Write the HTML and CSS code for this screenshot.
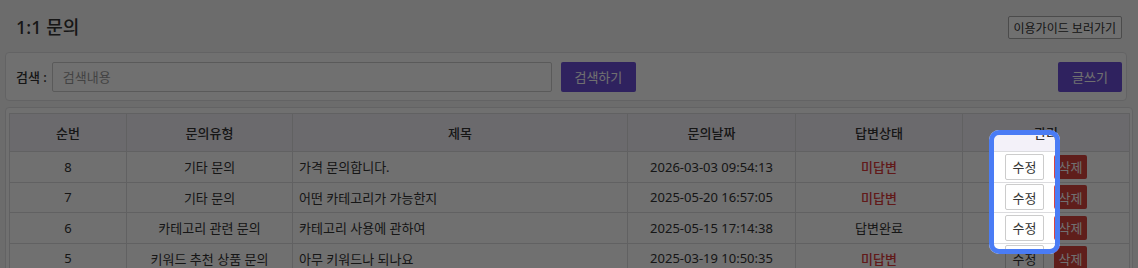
FILE: index.html
```html
<!DOCTYPE html>
<html lang="ko">
<head>
    <meta charset="UTF-8">
    <meta name="viewport" content="width=device-width, initial-scale=1.0">
    <title>1:1 문의</title>
    <link rel="stylesheet" href="styles.css">
</head>
<body>
    <div id="page">
        <div class="topBar">
            <h1 class="pageTitle">1:1 문의</h1>
            <button class="guideButton">이용가이드 보러가기</button>
        </div>

        <div class="card searchCard">
            <label class="searchLabel">검색 :</label>
            <input type="text" class="searchInput" placeholder="검색내용">
            <button class="purpleButton searchButton">검색하기</button>
            <button class="purpleButton writeButton">글쓰기</button>
        </div>

        <div class="card tableCard">
            <table class="qnaTable">
                <colgroup>
                    <col style="width: 117px">
                    <col style="width: 166px">
                    <col style="width: 335px">
                    <col style="width: 168px">
                    <col style="width: 167px">
                    <col style="width: 167px">
                </colgroup>
                <thead>
                    <tr>
                        <th>순번</th>
                        <th>문의유형</th>
                        <th>제목</th>
                        <th>문의날짜</th>
                        <th>답변상태</th>
                        <th>관리</th>
                    </tr>
                </thead>
                <tbody>
                    <tr>
                        <td>8</td>
                        <td>기타 문의</td>
                        <td class="subject">가격 문의합니다.</td>
                        <td>2026-03-03 09:54:13</td>
                        <td class="waiting">미답변</td>
                        <td><div class="actions"><button class="editButton">수정</button><button class="deleteButton">삭제</button></div></td>
                    </tr>
                    <tr>
                        <td>7</td>
                        <td>기타 문의</td>
                        <td class="subject">어떤 카테고리가 가능한지</td>
                        <td>2025-05-20 16:57:05</td>
                        <td class="waiting">미답변</td>
                        <td><div class="actions"><button class="editButton">수정</button><button class="deleteButton">삭제</button></div></td>
                    </tr>
                    <tr>
                        <td>6</td>
                        <td>카테고리 관련 문의</td>
                        <td class="subject">카테고리 사용에 관하여</td>
                        <td>2025-05-15 17:14:38</td>
                        <td>답변완료</td>
                        <td><div class="actions"><button class="editButton">수정</button><button class="deleteButton">삭제</button></div></td>
                    </tr>
                    <tr>
                        <td>5</td>
                        <td>키워드 추천 상품 문의</td>
                        <td class="subject">아무 키워드나 되나요</td>
                        <td>2025-03-19 10:50:35</td>
                        <td class="waiting">미답변</td>
                        <td><div class="actions"><button class="editButton">수정</button><button class="deleteButton">삭제</button></div></td>
                    </tr>
                </tbody>
            </table>
        </div>
    </div>

    <!-- guide overlay: dims the page, leaves the edit buttons visible -->
    <div class="spotlight"></div>
</body>
</html>
```

FILE: styles.css
```css
* {
    margin: 0px;
    padding: 0px;
    box-sizing: border-box;
}
body, html {
    height: 100%;
    overflow: hidden;
}
body {
    background-color: #f5f5f6;
    font-family: "Noto Sans", "Noto Sans CJK KR", sans-serif;
    font-size: 13px;
    color: #333;
}
#page {
    padding: 0px 5px;
}
.topBar {
    display: flex;
    align-items: center;
    justify-content: space-between;
    padding: 16px 11px 0px 11px;
    height: 39px;
    margin-bottom: 13px;
}
.pageTitle {
    font-size: 18px;
    font-weight: 500;
    color: #333;
    line-height: 23px;
}
.guideButton {
    height: 23px;
    padding: 0px 5px;
    background-color: #fff;
    border: 1px solid #aaa;
    border-radius: 2px;
    font-family: inherit;
    font-size: 12px;
    color: #333;
}
.card {
    background-color: #fff;
    border: 1px solid #e2e2e4;
    border-radius: 4px;
}
.searchCard {
    display: flex;
    align-items: center;
    width: 1122px;
    height: 49px;
    padding: 0px 4px 0px 10px;
}
.searchLabel {
    font-weight: 500;
    margin-right: 5px;
}
.searchInput {
    width: 500px;
    height: 30px;
    border: 1px solid #ccc;
    border-radius: 2px;
    padding: 0px 10px;
    font-family: inherit;
    font-size: 13px;
    color: #333;
}
.searchInput::placeholder {
    color: #999;
}
.purpleButton {
    height: 30px;
    border: 0px;
    border-radius: 2px;
    background-color: #6b4fd8;
    color: #fff;
    font-family: inherit;
    font-size: 13px;
}
.searchButton {
    width: 75px;
    margin-left: 9px;
}
.writeButton {
    width: 64px;
    margin-left: auto;
}
.tableCard {
    margin-top: 6px;
    width: 1128px;
    padding: 5px 3px 0px 3px;
    height: 200px;
}
.qnaTable {
    width: 1120px;
    border-collapse: collapse;
    table-layout: fixed;
}
.qnaTable th, .qnaTable td {
    border: 1px solid #dcdcdf;
    text-align: center;
    white-space: nowrap;
}
.qnaTable th {
    height: 38px;
    background-color: #f3f1f9;
    font-weight: 500;
}
.qnaTable td {
    height: 30.5px;
    padding: 0px 6px;
}
.qnaTable td.subject {
    text-align: left;
}
.qnaTable td.waiting {
    color: #dc3b3b;
    font-weight: 500;
}
.actions {
    display: flex;
    align-items: center;
    justify-content: center;
    gap: 10px;
}
.editButton {
    height: 26px;
    width: 39px;
    background-color: #fff;
    border: 1px solid #ccc;
    border-radius: 2px;
    font-family: inherit;
    font-size: 13px;
    color: #333;
}
.deleteButton {
    height: 24px;
    width: 33px;
    background-color: #d9443f;
    border: 0px;
    border-radius: 2px;
    font-family: inherit;
    font-size: 13px;
    color: #fff;
}
.spotlight {
    position: absolute;
    left: 989px;
    top: 130px;
    width: 71px;
    height: 124px;
    border: 5px solid #4a7cf5;
    border-radius: 10px;
    box-shadow: 0 0 0 2000px rgba(0, 0, 0, 0.56);
}
```
